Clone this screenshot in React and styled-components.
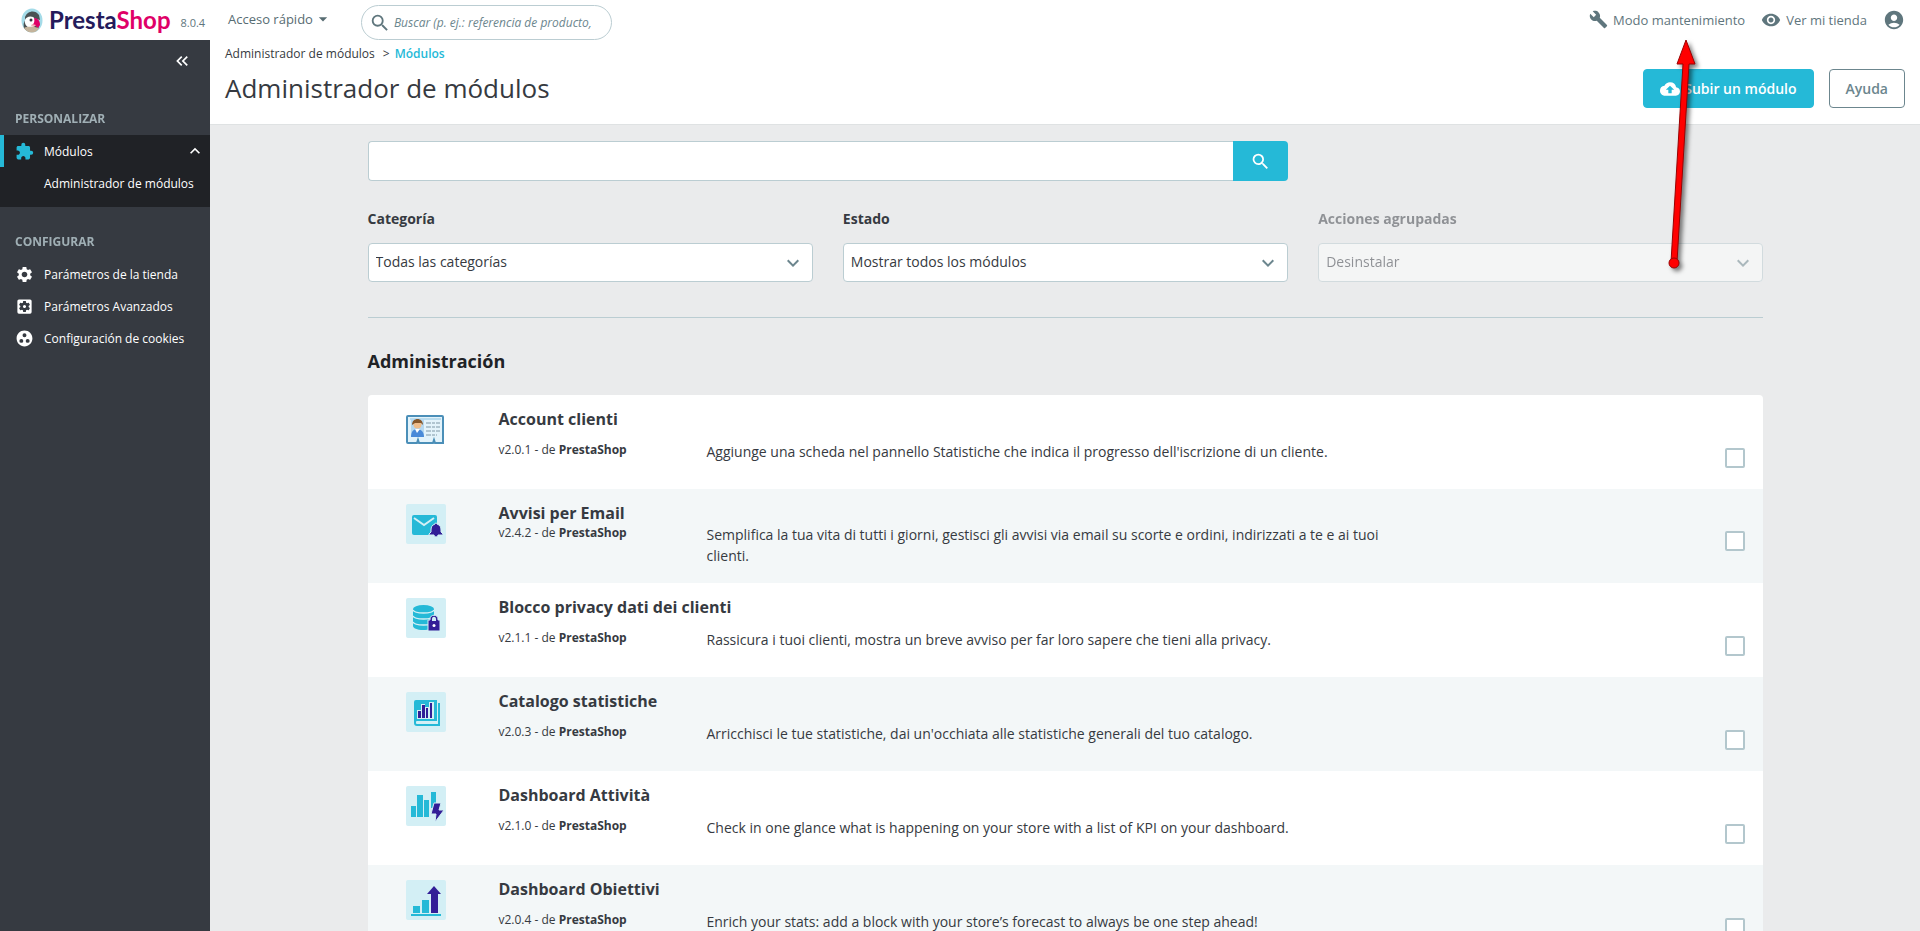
import styled, { createGlobalStyle, css } from "styled-components";
import {
  MdAccountCircle,
  MdBuild,
  MdCloudUpload,
  MdExtension,
  MdGroupWork,
  MdKeyboardArrowDown,
  MdKeyboardArrowUp,
  MdKeyboardDoubleArrowLeft,
  MdSearch,
  MdSettings,
  MdSettingsApplications,
  MdVisibility,
  MdArrowDropDown,
} from "react-icons/md";

const GlobalStyle = createGlobalStyle`
  * {
    box-sizing: border-box;
  }
  body {
    margin: 0;
    background-color: #eaebec;
    color: #363a41;
    font-family: "Open Sans", "Noto Sans", sans-serif;
    font-size: 14px;
    overflow: hidden;
  }
  button, input, select {
    font-family: inherit;
  }
  a {
    color: inherit;
    text-decoration: none;
  }
`;

const Page = styled.div`
  display: flex;
  flex-direction: column;
  height: 100vh;
`;

const TopBar = styled.header`
  display: flex;
  align-items: flex-start;
  height: 40px;
  flex-shrink: 0;
  background-color: #fff;
  color: #5f767d;
`;

const Brand = styled.div`
  display: flex;
  align-items: center;
  gap: 6px;
  width: 210px;
  height: 40px;
  padding-left: 21px;
`;

const BrandName = styled.a`
  font-family: Lato, "Open Sans", sans-serif;
  font-size: 24px;
  font-weight: 700;
  line-height: 24px;
  color: #251b5b;
  span {
    color: #df0067;
  }
`;

const Version = styled.span`
  padding: 6px 0 0 4px;
  font-size: 11px;
  line-height: 16px;
`;

const QuickAccess = styled.button`
  display: flex;
  align-items: center;
  height: 38px;
  margin-left: 18px;
  padding: 0;
  border: 0;
  background: none;
  color: #576c72;
  font-size: 13px;
  cursor: pointer;
`;

const GlobalSearch = styled.label`
  position: relative;
  display: flex;
  align-items: center;
  width: 251px;
  height: 35px;
  margin: 5px 0 0 28px;
  padding: 0 20px 0 7px;
  border: 1px solid #bbcdd2;
  border-radius: 18px;
  background-color: #fff;
  z-index: 1;
  input {
    flex: 1;
    min-width: 0;
    padding: 0 0 0 3px;
    border: 0;
    outline: 0;
    font-size: 12px;
    font-style: italic;
  }
  input::placeholder {
    color: #6c868e;
    opacity: 1;
  }
`;

const TopLinks = styled.nav`
  display: flex;
  align-items: center;
  gap: 16px;
  height: 39px;
  margin-left: auto;
  padding-right: 15px;
  a {
    display: flex;
    align-items: center;
    gap: 5px;
    font-size: 13px;
  }
`;

const Columns = styled.div`
  display: flex;
  flex: 1;
  min-height: 0;
`;

const Sidebar = styled.aside`
  width: 210px;
  flex-shrink: 0;
  background-color: #363a41;
  color: #fff;
`;

const Collapse = styled.button`
  display: block;
  margin: 11px 18px 0 auto;
  padding: 0;
  border: 0;
  background: none;
  color: #fff;
  line-height: 0;
  cursor: pointer;
`;

const MenuTitle = styled.h2`
  margin: 0;
  padding: 0 15px;
  font-size: 12px;
  font-weight: 700;
  line-height: 16px;
  color: #bbcdd2;
  opacity: 0.8;
  text-transform: uppercase;
`;

const Menu = styled.nav`
  padding: ${(props) => (props.$first ? "40px 0 0" : "27px 0 0")};
`;

const MenuList = styled.ul`
  margin: 8px 0 0;
  padding: 0;
  list-style: none;
  ${(props) =>
    props.$open &&
    css`
      padding-bottom: 8px;
      background-color: #202226;
    `}
`;

const MenuLink = styled.a`
  display: flex;
  align-items: center;
  gap: 10px;
  height: 32px;
  padding: 0 5px 0 15px;
  font-size: 12px;
  font-weight: 500;
  white-space: nowrap;
  ${(props) =>
    props.$current &&
    css`
      border-left: 4px solid #25b9d7;
      padding-left: 11px;
      > svg:first-child {
        color: #25b9d7;
      }
      > svg:last-child {
        margin-left: auto;
      }
    `}
  ${(props) =>
    props.$sub &&
    css`
      padding-left: 44px;
    `}
`;

const Main = styled.main`
  flex: 1;
  min-width: 0;
`;

const PageHead = styled.div`
  display: flex;
  justify-content: space-between;
  align-items: flex-end;
  height: 85px;
  padding: 0 15px 16px;
  border-bottom: 1px solid #dfe2e3;
  background-color: #fff;
`;

const Breadcrumb = styled.nav`
  display: flex;
  gap: 8px;
  font-size: 12px;
  line-height: 16px;
  a:last-child {
    color: #25b9d7;
    font-weight: 600;
  }
  a:last-child::before {
    content: ">";
    margin-right: 5px;
    color: #363a41;
    font-weight: 400;
  }
`;

const PageTitle = styled.h1`
  margin: 8px 0 2px;
  font-size: 26px;
  font-weight: 400;
  line-height: 36px;
`;

const Actions = styled.div`
  display: flex;
  gap: 15px;
`;

const Button = styled.button`
  display: flex;
  align-items: center;
  gap: 4px;
  height: 39px;
  padding: 0 16px;
  border: 1px solid ${(props) => (props.$primary ? "#25b9d7" : "#6c868e")};
  border-radius: 4px;
  background-color: ${(props) => (props.$primary ? "#25b9d7" : "#fff")};
  color: ${(props) => (props.$primary ? "#fff" : "#6c868e")};
  font-size: 14px;
  font-weight: 600;
  cursor: pointer;
`;

const Content = styled.div`
  width: 83.3333%;
  margin: 0 auto;
  padding: 16px 14px 0 15px;
`;

// spans two of the three filter columns below it
const SearchForm = styled.form`
  display: flex;
  width: calc((200% - 30px) / 3);
  input {
    flex: 1;
    min-width: 0;
    height: 40px;
    padding: 0 8px;
    border: 1px solid #bbcdd2;
    border-right: 0;
    border-radius: 4px 0 0 4px;
    outline: 0;
    font-size: 14px;
  }
  button {
    display: flex;
    align-items: center;
    justify-content: center;
    width: 55px;
    height: 40px;
    padding: 0;
    border: 0;
    border-radius: 0 4px 4px 0;
    background-color: #25b9d7;
    color: #fff;
    cursor: pointer;
  }
`;

const Filters = styled.div`
  display: grid;
  grid-template-columns: repeat(3, 1fr);
  gap: 30px;
  margin-top: 28px;
  padding-bottom: 35px;
  border-bottom: 1px solid #bbcdd2;
`;

const Filter = styled.div`
  opacity: ${(props) => (props.$disabled ? 0.5 : 1)};
  label {
    display: block;
    margin-bottom: 14px;
    font-size: 14px;
    font-weight: 700;
    line-height: 20px;
  }
`;

const SelectBox = styled.div`
  display: grid;
  align-items: center;
  select,
  svg {
    grid-area: 1 / 1;
  }
  select {
    width: 100%;
    height: 39px;
    padding: 0 36px 2px 7px;
    border: 1px solid #bbcdd2;
    border-radius: 4px;
    background-color: #fff;
    color: #363a41;
    font-size: 14px;
    appearance: none;
    opacity: 1;
  }
  svg {
    justify-self: end;
    margin-right: 8px;
    color: #6c868e;
    pointer-events: none;
  }
`;

const SectionTitle = styled.h2`
  margin: 30px 0 21px;
  font-size: 18px;
  font-weight: 700;
  line-height: 26px;
  color: #202226;
`;

const ModuleList = styled.ul`
  margin: 0;
  padding: 0;
  border-radius: 4px;
  list-style: none;
  overflow: hidden;
`;

const ModuleItem = styled.li`
  display: grid;
  grid-template-columns: 93px 208px 1fr 60px;
  grid-template-rows: auto auto;
  align-content: start;
  height: 94px;
  padding: 13px 0 0 38px;
  background-color: #fff;
  &:nth-child(even) {
    background-color: #f3f7f8;
  }
  > svg {
    grid-row: 1 / 3;
    margin-top: 2px;
  }
`;

const ModuleName = styled.h3`
  grid-column: 2 / 4;
  margin: 0;
  font-size: 16px;
  font-weight: 700;
  line-height: 22px;
`;

const ModuleVersion = styled.div`
  grid-column: 2;
  padding-top: ${(props) => (props.$tight ? "0" : "11px")};
  font-size: 12px;
  line-height: 18px;
`;

const ModuleText = styled.p`
  grid-column: 3;
  max-width: 684px;
  margin: 0;
  padding-top: ${(props) => (props.$tight ? "0" : "11px")};
  font-size: 14px;
  line-height: 21px;
`;

const ModuleCheck = styled.input`
  width: 20px;
  height: 20px;
  margin: ${(props) => (props.$tight ? "7px" : "18px")} 0 0 22px;
  border: 2px solid #b3c7cd;
  border-radius: 2px;
  background-color: #fff;
  appearance: none;
  &:checked {
    background-color: #25b9d7;
  }
`;

const Arrow = styled.svg`
  position: absolute;
  top: 36px;
  right: 216px;
  filter: drop-shadow(3px 3px 2px rgba(0, 0, 0, 0.5));
  pointer-events: none;
  z-index: 5;
`;

const PuffinLogo = () => (
  <svg width="22" height="25" viewBox="0 0 22 25">
    <ellipse cx="11" cy="12.5" rx="10.500" ry="12" fill="#a4dbe8" />
    <path d="M3 20c-1-4 0-7 2-8l11 3c2 3 2 5 1 6-4 4-10 4-14-1z" fill="#4a5254" />
    <path d="M4 9C6 3 14 1 18 7l1 5-7-2-8 2z" fill="#4a5254" />
    <path d="M4 12c1-4 8-5 10-1 1 4 0 8-4 9-4 0-7-4-6-8z" fill="#fff" />
    <path d="M13 10c4 0 6 3 6 7l-2 3c-2-2-4-3-6-3 2-1 3-4 2-7z" fill="#df0067" />
    <path d="M11 16l4 1-2 2-3-1z" fill="#f4b0b8" />
    <path d="M3 20c4-2 10-1 15 0-3 6-11 6-15 0z" fill="#c4b49c" />
    <circle cx="10" cy="12" r="1.500" fill="#363a41" />
  </svg>
);

const CardIcon = () => (
  <svg width="40" height="40" viewBox="0 0 40 40">
    <path
      d="M2 6h34q1 0 1 1v26h-8l-1-3-1 3H13l-1-3-1 3H2q-1 0-1-1V7q0-1 1-1z"
      fill="#e3f3fb"
      stroke="#4b8fb8"
      strokeWidth="2"
    />
    <rect x="4" y="8" width="31" height="2" fill="#b9dcee" />
    <rect x="5" y="9" width="13" height="17" fill="#b5d8f0" />
    <path d="M5 27c0-6 3-8 6-8s7 2 7 8z" fill="#4a8ad8" />
    <path d="M9 19l2 4 3-4z" fill="#fff" />
    <circle cx="11.500" cy="14.500" r="4" fill="#efbd8b" />
    <path d="M6 15c0-8 11-8 11 0l-2-2H9z" fill="#86572a" />
    <path
      d="M20 13h14M20 17h14M20 21h14M20 25h11"
      stroke="#7f97a6"
      strokeWidth="1"
      strokeDasharray="5 1 3 1"
    />
  </svg>
);

const Tile = ({ children }) => (
  <svg width="40" height="40" viewBox="0 0 40 40">
    <rect width="40" height="40" rx="2" fill="#d3eff5" />
    {children}
  </svg>
);

const MailIcon = () => (
  <Tile>
    <rect x="6" y="11" width="25" height="20" rx="2" fill="#25b9d7" />
    <path d="M8 14l10 7 10-7" fill="none" stroke="#d3eff5" strokeWidth="2" />
    <path
      d="M30 19q1 0 1 1c3 1 4 3 4 6v2l2 2v1h-5q0 2-2 2t-2-2h-5v-1l2-2v-2c0-3 1-5 4-6q0-1 1-1z"
      fill="#321e97"
      stroke="#d3eff5"
      strokeWidth="1"
    />
  </Tile>
);

const PrivacyIcon = () => (
  <Tile>
    <path d="M7 11v17c0 2 4 4 10 4s11-2 11-4V11z" fill="#25b9d7" />
    <ellipse cx="17.500" cy="11" rx="10.500" ry="4" fill="#25b9d7" />
    <path
      d="M7 12c2 4 19 4 21 0M7 18c2 4 19 4 21 0M7 24c2 4 19 4 21 0"
      fill="none"
      stroke="#d3eff5"
      strokeWidth="1.500"
    />
    <path d="M22 22h2v-1c0-5 8-5 8 0v1h2v11H22z" fill="#321e97" stroke="#d3eff5" strokeWidth="1" />
    <path d="M26 23v-2c0-3 4-3 4 0v2z" fill="#d3eff5" />
    <circle cx="28" cy="27.500" r="1.500" fill="#fff" />
  </Tile>
);

const CatalogIcon = () => (
  <Tile>
    <path
      d="M10 8h21v21H11q-1 0-1 1v1q0 1 1 1h21V11h2v23H11q-3 0-3-3V10q0-2 2-2z"
      fill="#25b9d7"
    />
    <path d="M11 18h4v-6h4v3h4v-5h5v17H11z" fill="#d3eff5" />
    <path d="M12 19h3v7h-3zM16 13h3v13h-3zM20 16h2v10h-2zM24 11h2v15h-2z" fill="#321e97" />
  </Tile>
);

const ActivityIcon = () => (
  <Tile>
    <path d="M5 20h5v11H5zM11 9h6v22h-6zM18 14h5v17h-5zM25 6h5v16h-5z" fill="#25b9d7" />
    <path
      d="M28 17h7l-2 7h5L29 36l1-8h-5z"
      fill="#321e97"
      stroke="#d3eff5"
      strokeWidth="1"
    />
  </Tile>
);

const GoalsIcon = () => (
  <Tile>
    <path d="M7 26h7v7H7zM16 20h7v13h-7zM5 34h30v2H5z" fill="#25b9d7" />
    <path d="M28 6l7 8h-3v19h-7V14h-4z" fill="#321e97" />
  </Tile>
);

const modules = [
  {
    name: "Account clienti",
    version: "v2.0.1",
    Icon: CardIcon,
    text: "Aggiunge una scheda nel pannello Statistiche che indica il progresso dell'iscrizione di un cliente.",
  },
  {
    name: "Avvisi per Email",
    version: "v2.4.2",
    Icon: MailIcon,
    tight: true,
    text: "Semplifica la tua vita di tutti i giorni, gestisci gli avvisi via email su scorte e ordini, indirizzati a te e ai tuoi clienti.",
  },
  {
    name: "Blocco privacy dati dei clienti",
    version: "v2.1.1",
    Icon: PrivacyIcon,
    text: "Rassicura i tuoi clienti, mostra un breve avviso per far loro sapere che tieni alla privacy.",
  },
  {
    name: "Catalogo statistiche",
    version: "v2.0.3",
    Icon: CatalogIcon,
    text: "Arricchisci le tue statistiche, dai un'occhiata alle statistiche generali del tuo catalogo.",
  },
  {
    name: "Dashboard Attività",
    version: "v2.1.0",
    Icon: ActivityIcon,
    text: "Check in one glance what is happening on your store with a list of KPI on your dashboard.",
  },
  {
    name: "Dashboard Obiettivi",
    version: "v2.0.4",
    Icon: GoalsIcon,
    text: "Enrich your stats: add a block with your store’s forecast to always be one step ahead!",
  },
];

const filters = [
  { id: "category", label: "Categoría", value: "Todas las categorías" },
  { id: "status", label: "Estado", value: "Mostrar todos los módulos" },
  { id: "bulk", label: "Acciones agrupadas", value: "Desinstalar", disabled: true },
];

const Header = () => (
  <TopBar>
    <Brand>
      <PuffinLogo />
      <BrandName href="#">
        Presta<span>Shop</span>
      </BrandName>
      <Version>8.0.4</Version>
    </Brand>
    <QuickAccess type="button">
      Acceso rápido
      <MdArrowDropDown size={20} />
    </QuickAccess>
    <GlobalSearch>
      <MdSearch size={22} />
      <input
        type="text"
        aria-label="Buscar"
        placeholder="Buscar (p. ej.: referencia de producto, nombre"
      />
    </GlobalSearch>
    <TopLinks>
      <a href="#">
        <MdBuild size={19} />
        Modo mantenimiento
      </a>
      <a href="#">
        <MdVisibility size={20} />
        Ver mi tienda
      </a>
      <a href="#" aria-label="Cuenta">
        <MdAccountCircle size={22} />
      </a>
    </TopLinks>
  </TopBar>
);

const SideMenu = () => (
  <Sidebar>
    <Collapse type="button" aria-label="Contraer">
      <MdKeyboardDoubleArrowLeft size={20} />
    </Collapse>
    <Menu $first>
      <MenuTitle>Personalizar</MenuTitle>
      <MenuList $open>
        <li>
          <MenuLink href="#" $current>
            <MdExtension size={19} />
            Módulos
            <MdKeyboardArrowUp size={20} />
          </MenuLink>
        </li>
        <li>
          <MenuLink href="#" $sub>
            Administrador de módulos
          </MenuLink>
        </li>
      </MenuList>
    </Menu>
    <Menu>
      <MenuTitle>Configurar</MenuTitle>
      <MenuList>
        <li>
          <MenuLink href="#">
            <MdSettings size={19} />
            Parámetros de la tienda
          </MenuLink>
        </li>
        <li>
          <MenuLink href="#">
            <MdSettingsApplications size={19} />
            Parámetros Avanzados
          </MenuLink>
        </li>
        <li>
          <MenuLink href="#">
            <MdGroupWork size={19} />
            Configuración de cookies
          </MenuLink>
        </li>
      </MenuList>
    </Menu>
  </Sidebar>
);

const App = () => {
  return (
    <Page>
      <GlobalStyle />
      <Header />
      <Columns>
        <SideMenu />
        <Main>
          <PageHead>
            <div>
              <Breadcrumb>
                <a href="#">Administrador de módulos</a>
                <a href="#">Módulos</a>
              </Breadcrumb>
              <PageTitle>Administrador de módulos</PageTitle>
            </div>
            <Actions>
              <Button type="button" $primary>
                <MdCloudUpload size={20} />
                Subir un módulo
              </Button>
              <Button type="button">Ayuda</Button>
            </Actions>
          </PageHead>
          <Content>
            <SearchForm>
              <input type="text" aria-label="Buscar módulos" />
              <button type="button" aria-label="Buscar">
                <MdSearch size={21} />
              </button>
            </SearchForm>
            <Filters>
              {filters.map((filter) => (
                <Filter key={filter.id} $disabled={filter.disabled}>
                  <label htmlFor={filter.id}>{filter.label}</label>
                  <SelectBox>
                    <select id={filter.id} disabled={filter.disabled}>
                      <option>{filter.value}</option>
                    </select>
                    <MdKeyboardArrowDown size={24} />
                  </SelectBox>
                </Filter>
              ))}
            </Filters>
            <SectionTitle>Administración</SectionTitle>
            <ModuleList>
              {modules.map(({ name, version, text, tight, Icon }) => (
                <ModuleItem key={name}>
                  <Icon />
                  <ModuleName>{name}</ModuleName>
                  <ModuleVersion $tight={tight}>
                    {version} - de <b>PrestaShop</b>
                  </ModuleVersion>
                  <ModuleText $tight={tight}>{text}</ModuleText>
                  <ModuleCheck type="checkbox" aria-label={name} $tight={tight} />
                </ModuleItem>
              ))}
            </ModuleList>
          </Content>
        </Main>
      </Columns>
      <Arrow width="40" height="240" viewBox="0 0 40 240">
        <path
          d="M22 4l9 24h-6l-12 198h-6l12-198h-6z"
          fill="#f00"
          stroke="#900"
          strokeWidth="1"
        />
        <circle cx="10" cy="227" r="5" fill="#f00" stroke="#900" />
      </Arrow>
    </Page>
  );
};

export default App;
